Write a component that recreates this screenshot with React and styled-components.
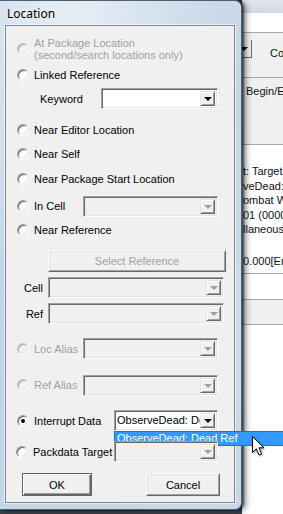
import styled, { createGlobalStyle } from "styled-components";

const GlobalStyle = createGlobalStyle`
  html, body {
    margin: 0;
    padding: 0;
  }
  body {
    width: 283px;
    height: 514px;
    overflow: hidden;
    background: #3a4148;
    font-family: "Liberation Sans", Arial, sans-serif;
  }
`;

const Desktop = styled.div`
  position: relative;
  width: 283px;
  height: 514px;
  display: flex;
  align-items: flex-start;
  overflow: hidden;
  background: #3a4148;
`;

const DialogFrame = styled.div`
  position: relative;
  z-index: 2;
  flex: none;
  width: 242px;
  height: 510px;
  box-sizing: border-box;
  display: flex;
  flex-direction: column;
  padding: 0 6px 6px 5px;
  border: 1px solid #4d5f72;
  border-left: none;
  border-radius: 0 7px 7px 0;
  background:
    radial-gradient(ellipse at 30% 8%, rgba(255, 255, 255, 0.55), transparent 60%),
    radial-gradient(ellipse at 80% 60%, rgba(255, 255, 255, 0.35), transparent 55%),
    linear-gradient(180deg, #cbdae8 0%, #bdd0e2 50%, #c6d6e5 100%);
  box-shadow: 2px 0 2px rgba(0, 0, 0, 0.55), 4px 1px 6px rgba(0, 0, 0, 0.45);
`;

const TitleBar = styled.div`
  height: 24px;
  display: flex;
  align-items: center;
  padding-left: 2px;
  font-family: "Noto Sans", "Open Sans", sans-serif;
  font-size: 12px;
  color: #000;
  text-shadow: 0 0 6px rgba(255, 255, 255, 0.95);
`;

const Client = styled.div`
  flex: 1;
  display: flex;
  flex-direction: column;
  padding-top: 11px;
  background: #f0f0f0;
  border: 1px solid #7a8a9b;
  box-shadow: 0 0 0 1px rgba(255, 255, 255, 0.55);
  font-size: 11px;
  color: #000;
`;

const Row = styled.div`
  position: relative;
  display: flex;
  align-items: center;
  flex: none;
  height: ${(p) => p.$h}px;
  margin-top: ${(p) => p.$mt}px;
  padding-left: ${(p) => p.$pl ?? 11}px;
  padding-right: ${(p) => p.$pr ?? 16}px;
`;

const Radio = styled.span`
  position: relative;
  flex: none;
  width: 12px;
  height: 12px;
  box-sizing: border-box;
  border-radius: 50%;
  border: 1px solid;
  border-color: ${(p) =>
    p.$disabled ? "#c4c4c4 #fff #fff #c4c4c4" : "#a0a0a0 #fff #fff #a0a0a0"};
  box-shadow: ${(p) =>
    p.$disabled
      ? "inset 1px 1px 0 #a8a8a8, inset -1px -1px 0 #e3e3e3"
      : "inset 1px 1px 0 #696969, inset -1px -1px 0 #e3e3e3"};
  background: ${(p) => (p.$disabled ? "#f0f0f0" : "#fff")};

  &::after {
    content: "";
    display: ${(p) => (p.$checked ? "block" : "none")};
    position: absolute;
    left: 3px;
    top: 3px;
    width: 4px;
    height: 4px;
    border-radius: 50%;
    background: #000;
  }
`;

const Label = styled.span`
  margin-left: ${(p) => p.$ml ?? 5}px;
  line-height: 12px;
  white-space: pre-line;
  color: ${(p) => (p.$disabled ? "#a0a0a0" : "#000")};
`;

const FieldLabel = styled.span`
  flex: none;
  width: ${(p) => p.$w}px;
  text-align: ${(p) => p.$align ?? "left"};
`;

const Combo = styled.div`
  position: relative;
  flex: none;
  margin-left: ${(p) => (p.$ml != null ? `${p.$ml}px` : "auto")};
  width: ${(p) => p.$w}px;
  height: ${(p) => p.$h ?? 21}px;
  box-sizing: border-box;
  display: flex;
  padding: 2px;
  border: 1px solid;
  border-color: #a0a0a0 #fff #fff #a0a0a0;
  box-shadow: inset 1px 1px 0 #696969, inset -1px -1px 0 #e3e3e3;
  background: ${(p) => (p.$disabled ? "#f0f0f0" : "#fff")};
`;

const ComboText = styled.div`
  flex: 1;
  overflow: hidden;
  white-space: nowrap;
  line-height: 15px;
  color: #000;
`;

const DropButton = styled.div`
  flex: none;
  width: 15px;
  box-sizing: border-box;
  display: flex;
  align-items: center;
  justify-content: center;
  border: 1px solid;
  border-color: #e3e3e3 #696969 #696969 #e3e3e3;
  box-shadow: inset 1px 1px 0 #fff, inset -1px -1px 0 #a0a0a0;
  background: #f0f0f0;

  &::after {
    content: "";
    width: 0;
    height: 0;
    margin-top: 1px;
    border-left: 4px solid transparent;
    border-right: 4px solid transparent;
    border-top: 4px solid ${(p) => (p.$disabled ? "#a0a0a0" : "#000")};
  }
`;

const DropList = styled.div`
  position: absolute;
  left: -1px;
  top: 100%;
  margin-top: 1px;
  width: 170px;
  height: 15px;
  box-sizing: border-box;
  padding-left: 2px;
  line-height: 13px;
  white-space: nowrap;
  background: #3399ff;
  border: 1px solid #2a6cc0;
  color: #fff;
`;

const Button = styled.div`
  flex: none;
  margin-left: ${(p) => p.$ml ?? 0}px;
  width: ${(p) => p.$w}px;
  height: ${(p) => p.$h}px;
  box-sizing: border-box;
  display: flex;
  align-items: center;
  justify-content: center;
  background: #f0f0f0;
  border: 1px solid;
  border-color: ${(p) => (p.$default ? "#646464" : "#fff #696969 #696969 #fff")};
  box-shadow: ${(p) =>
    p.$default
      ? "inset 1px 1px 0 #fff, inset -1px -1px 0 #696969, inset -2px -2px 0 #a0a0a0"
      : "inset 1px 1px 0 #e3e3e3, inset -1px -1px 0 #a0a0a0"};
  color: ${(p) => (p.$disabled ? "#a0a0a0" : "#000")};
`;

const Back = styled.div`
  flex: 1;
  height: 514px;
  display: flex;
  flex-direction: column;
  overflow: hidden;
  background: #fff;
  font-size: 11px;
  color: #111;
`;

const Band = styled.div`
  flex: none;
  box-sizing: border-box;
  height: ${(p) => p.$h}px;
  background: ${(p) => p.$bg};
  border-bottom: ${(p) => (p.$line ? "1px solid #a7a7a7" : "none")};
  display: flex;
  flex-direction: ${(p) => p.$dir ?? "row"};
  align-items: flex-start;
  padding: ${(p) => p.$pad ?? "0"};
  white-space: nowrap;
`;

const ComboStub = styled.div`
  flex: none;
  width: 10px;
  height: 18px;
  margin-top: 7px;
  box-sizing: border-box;
  display: flex;
  align-items: center;
  justify-content: flex-start;
  border-right: 1px solid #696969;
  border-bottom: 1px solid #696969;
  background: #f0f0f0;

  &::after {
    content: "";
    width: 0;
    height: 0;
    margin-left: -2px;
    border-left: 4px solid transparent;
    border-right: 4px solid transparent;
    border-top: 4px solid #000;
  }
`;

const BackText = styled.span`
  margin-left: ${(p) => p.$ml ?? 0}px;
  margin-top: ${(p) => p.$mt ?? 0}px;
  line-height: ${(p) => p.$lh ?? 14}px;
`;

const Cursor = styled.svg`
  position: absolute;
  left: 252px;
  top: 436px;
  z-index: 5;
  filter: drop-shadow(1px 1px 1px rgba(0, 0, 0, 0.35));
`;

function RadioRow({ mt, h = 18, label, disabled, checked, pl, children }) {
  return (
    <Row $mt={mt} $h={h} $pl={pl}>
      <Radio $disabled={disabled} $checked={checked} />
      <Label $disabled={disabled}>{label}</Label>
      {children}
    </Row>
  );
}

function ComboBox({ w, ml, disabled, text, children }) {
  return (
    <Combo $w={w} $ml={ml} $disabled={disabled}>
      <ComboText>{text}</ComboText>
      <DropButton $disabled={disabled} />
      {children}
    </Combo>
  );
}

export default function App() {
  return (
    <>
      <GlobalStyle />
      <Desktop>
        <DialogFrame>
          <TitleBar>Location</TitleBar>
          <Client>
            <RadioRow
              mt={0}
              h={24}
              disabled
              label={"At Package Location\n(second/search locations only)"}
            />
            <RadioRow mt={5} label="Linked Reference" />
            <Row $mt={4} $h={21} $pl={34}>
              <FieldLabel $w={60}>Keyword</FieldLabel>
              <ComboBox w={117} />
            </Row>
            <RadioRow mt={12} label="Near Editor Location" />
            <RadioRow mt={6} label="Near Self" />
            <RadioRow mt={7} label="Near Package Start Location" />
            <RadioRow mt={7} h={22} label="In Cell">
              <ComboBox w={135} disabled />
            </RadioRow>
            <RadioRow mt={4} label="Near Reference" />
            <Row $mt={11} $h={22} $pl={0}>
              <Button $ml={42} $w={178} $h={22} $disabled>
                Select Reference
              </Button>
            </Row>
            <Row $mt={5} $h={21} $pl={0} $pr={10}>
              <FieldLabel $w={37} $align="right">
                Cell
              </FieldLabel>
              <ComboBox w={176} ml={5} disabled />
            </Row>
            <Row $mt={5} $h={21} $pl={0} $pr={10}>
              <FieldLabel $w={37} $align="right">
                Ref
              </FieldLabel>
              <ComboBox w={176} ml={5} disabled />
            </Row>
            <RadioRow mt={14} h={21} disabled label="Loc Alias">
              <ComboBox w={135} disabled />
            </RadioRow>
            <RadioRow mt={15} h={22} disabled label="Ref Alias">
              <ComboBox w={135} disabled />
            </RadioRow>
            <RadioRow mt={14} h={21} checked label="Interrupt Data">
              <ComboBox w={104} text="ObserveDead: Dead Ref">
                <DropList>ObserveDead: Dead Ref</DropList>
              </ComboBox>
            </RadioRow>
            <RadioRow mt={10} h={21} pl={10} label="Packdata Target">
              <ComboBox w={104} disabled />
            </RadioRow>
            <Row $mt={11} $h={23} $pl={0}>
              <Button $ml={16} $w={70} $h={23} $default>
                OK
              </Button>
              <Button $ml={54} $w={74} $h={23}>
                Cancel
              </Button>
            </Row>
          </Client>
        </DialogFrame>

        <Back>
          <Band
            $h={13}
            $bg="linear-gradient(180deg, #e3e8ee 0%, #cfd9e3 100%)"
          />
          <Band $h={20} $bg="#fff" $line />
          <Band $h={45} $bg="#f0f0f0" $line>
            <ComboStub />
            <BackText $ml={18} $mt={13}>
              Co
            </BackText>
          </Band>
          <Band $h={67} $bg="#f0f0f0" $line>
            <BackText $ml={4} $mt={6}>
              Begin/End
            </BackText>
          </Band>
          <Band $h={129} $bg="#fff" $line $dir="column" $pad="19px 0 0 1px">
            <BackText $lh={14.5}>t: Target</BackText>
            <BackText $lh={14.5}>veDead:</BackText>
            <BackText $lh={14.5}>ombat W</BackText>
            <BackText $lh={14.5}>01 (0000</BackText>
            <BackText $lh={14.5}>llaneous</BackText>
            <BackText $mt={17}>0.000[Er</BackText>
          </Band>
          <Band $h={26} $bg="#fff" $line />
          <Band $h={25} $bg="#f0f0f0" $line />
        </Back>

        <Cursor width="14" height="22" viewBox="0 0 14 22">
          <path
            d="M0.5 0.5 L0.5 16.5 L4.3 12.8 L7 19 L9.6 17.9 L7 11.8 L12 11.8 Z"
            fill="#fff"
            stroke="#000"
            strokeWidth="1"
            strokeLinejoin="miter"
          />
        </Cursor>
      </Desktop>
    </>
  );
}
